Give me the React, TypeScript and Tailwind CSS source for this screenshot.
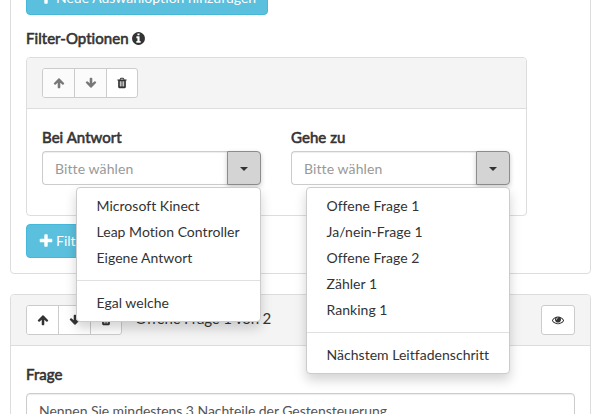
import type { ReactNode } from 'react';

const paths = {
  arrow:
    'M1675 971q0 51-37 90l-75 75q-38 38-91 38-54 0-90-38l-294-293v704q0 52-37.5 84.5t-90.5 32.5h-128q-53 0-90.5-32.5t-37.5-84.5v-704l-294 293q-36 38-90 38t-90-38l-75-75q-38-38-38-90 0-53 38-91l651-651q35-37 90-37 54 0 91 37l651 651q37 39 37 91z',
  trash:
    'M704 1376v-704q0-14-9-23t-23-9h-64q-14 0-23 9t-9 23v704q0 14 9 23t23 9h64q14 0 23-9t9-23zm256 0v-704q0-14-9-23t-23-9h-64q-14 0-23 9t-9 23v704q0 14 9 23t23 9h64q14 0 23-9t9-23zm256 0v-704q0-14-9-23t-23-9h-64q-14 0-23 9t-9 23v704q0 14 9 23t23 9h64q14 0 23-9t9-23zm-544-992h448l-48-117q-7-9-17-11h-317q-10 2-17 11zm928 32v64q0 14-9 23t-23 9h-96v948q0 83-47 143.5t-113 60.5h-832q-66 0-113-58.5t-47-141.5v-952h-96q-14 0-23-9t-9-23v-64q0-14 9-23t23-9h309l70-167q15-37 54-63t79-26h320q40 0 79 26t54 63l70 167h309q14 0 23 9t9 23z',
  eye: 'M1664 960q-152-236-381-353 61 104 61 225 0 185-131.5 316.5t-316.5 131.5-316.5-131.5-131.5-316.5q0-121 61-225-229 117-381 353 133 205 333.5 326.5t434.5 121.5 434.5-121.5 333.5-326.5zm-720-384q0-20-14-34t-34-14q-125 0-214.5 89.5t-89.5 214.5q0 20 14 34t34 14 34-14 14-34q0-86 61-147t147-61q20 0 34-14t14-34zm848 384q0 34-20 69-140 230-376.5 368.5t-499.5 138.5-499.5-139-376.5-368q-20-35-20-69t20-69q140-229 376.5-368t499.5-139 499.5 139 376.5 368q20 35 20 69z',
  info: 'M1152 1376v-160q0-14-9-23t-23-9h-96v-512q0-14-9-23t-23-9h-320q-14 0-23 9t-9 23v160q0 14 9 23t23 9h96v320h-96q-14 0-23 9t-9 23v160q0 14 9 23t23 9h448q14 0 23-9t9-23zm-128-896v-160q0-14-9-23t-23-9h-192q-14 0-23 9t-9 23v160q0 14 9 23t23 9h192q14 0 23-9t9-23zm640 416q0 209-103 385.5t-279.5 279.5-385.5 103-385.5-103-279.5-279.5-103-385.5 103-385.5 279.5-279.5 385.5-103 385.5 103 279.5 279.5 103 385.5z',
  plus: 'M1600 736v192q0 40-28 68t-68 28h-416v416q0 40-28 68t-68 28h-192q-40 0-68-28t-28-68v-416h-416q-40 0-68-28t-28-68v-192q0-40 28-68t68-28h416v-416q0-40 28-68t68-28h192q40 0 68 28t28 68v416h416q40 0 68 28t28 68z',
};

function Icon({ name, className }: { name: keyof typeof paths; className: string }) {
  return (
    <svg viewBox="0 0 1792 1792" fill="currentColor" className={`shrink-0 ${className}`}>
      <path d={paths[name]} />
    </svg>
  );
}

function Label({ children }: { children: ReactNode }) {
  return (
    <div className="h-5 pb-px text-[15px] leading-[19px] tracking-[0.05px] whitespace-nowrap text-[#333] [-webkit-text-stroke:0.6px_#333]">
      {children}
    </div>
  );
}

function ButtonGroup({ faded }: { faded?: boolean }) {
  const arrow = faded ? 'size-3 text-[#333] opacity-65' : 'size-3 text-[#333]';
  const bg = faded ? 'bg-[#fbfbfb]' : 'bg-white';
  return (
    <div className="flex h-[30px] w-24 shrink-0 overflow-hidden rounded-[3px] border border-[#ccc] bg-white">
      <button className={`flex w-[31px] items-center justify-center ${bg}`}>
        <Icon name="arrow" className={arrow} />
      </button>
      <button className={`flex w-8 items-center justify-center border-l border-[#ccc] ${bg}`}>
        <Icon name="arrow" className={`${arrow} rotate-180`} />
      </button>
      <button className="flex flex-1 items-center justify-center border-l border-[#ccc]">
        <Icon name="trash" className="size-3 text-[#333]" />
      </button>
    </div>
  );
}

function Combo({
  label,
  items,
  last,
  menuClass,
}: {
  label: string;
  items: string[];
  last: string;
  menuClass: string;
}) {
  return (
    <div className="w-[219px]">
      <Label>{label}</Label>
      <div className="relative mt-[3px] flex h-[34px]">
        <div className="flex w-[185px] items-center rounded-l border border-r-0 border-[#ccc] bg-white px-3 pt-0.5 text-sm tracking-[0.1px] text-[#999] shadow-[inset_0_1px_1px_rgba(0,0,0,0.075)]">
          Bitte wählen
        </div>
        <button className="flex w-[34px] items-center justify-center rounded-r border border-[#8c8c8c] bg-[#d4d4d4] shadow-[0_2px_5px_rgba(0,0,0,0.2)]">
          <span className="mt-px border-x-4 border-t-4 border-x-transparent border-t-[#333]" />
        </button>
        <ul
          className={`absolute top-9 right-0 z-10 rounded border border-[#ccc] bg-white py-[5px] text-sm leading-5 tracking-[0.03px] text-[#333] shadow-[0_6px_12px_rgba(0,0,0,0.175)] ${menuClass}`}
        >
          {items.map((item) => (
            <li key={item} className="py-[3px] pl-[19.5px] whitespace-nowrap">
              {item}
            </li>
          ))}
          <li className="my-[9px] h-px bg-[#e0e0e0]" />
          <li className="py-[3px] pl-[19.5px] whitespace-nowrap">{last}</li>
        </ul>
      </div>
    </div>
  );
}

function AddButton({ children, className }: { children: ReactNode; className: string }) {
  return (
    <button
      className={`flex h-[34px] items-center rounded border border-[#46b8da] bg-[#5bc0de] pl-[11px] text-sm whitespace-nowrap text-white ${className}`}
    >
      <Icon name="plus" className="mr-[2px] size-4" />
      {children}
    </button>
  );
}

export default function App() {
  return (
    <div className="h-[414px] w-[595px] overflow-hidden bg-white pl-2.5 font-['Lato','Liberation_Sans',sans-serif] text-[#333]">
      <section className="-mt-5 h-[294px] w-[581px] rounded border border-[#ddd] px-[15px]">
        <AddButton className="w-[242px]">Neue Auswahloption hinzufügen</AddButton>
        <div className="mt-[14px] flex h-5 items-start">
          <Label>Filter-Optionen</Label>
          <Icon name="info" className="mt-0.5 ml-[2px] size-[15px]" />
        </div>
        <div className="mt-[8px] h-[159px] w-[501px] rounded border border-[#ddd]">
          <div className="h-[51px] rounded-t-[3px] border-b border-[#ddd] bg-[#f4f4f4] px-[15px] pt-[10px]">
            <ButtonGroup faded />
          </div>
          <div className="flex gap-[30px] px-[15px] pt-[19px]">
            <Combo
              label="Bei Antwort"
              items={['Microsoft Kinect', 'Leap Motion Controller', 'Eigene Antwort']}
              last="Egal welche"
              menuClass="w-[185px]"
            />
            <Combo
              label="Gehe zu"
              items={['Offene Frage 1', 'Ja/nein-Frage 1', 'Offene Frage 2', 'Zähler 1', 'Ranking 1']}
              last="Nächstem Leitfadenschritt"
              menuClass="w-[204px]"
            />
          </div>
        </div>
        <AddButton className="mt-2 w-[180px]">Filter hinzufügen</AddButton>
      </section>

      <section className="mt-5 h-[200px] w-[581px] rounded border border-[#ddd]">
        <header className="flex h-[51px] items-start rounded-t-[3px] border-b border-[#ddd] bg-[#f4f4f4] px-[15px] pt-[10px]">
          <ButtonGroup />
          <h3 className="ml-[13px] text-[15px] leading-[27px] tracking-[-0.17px] whitespace-nowrap">
            Offene Frage 1 von 2
          </h3>
          <button className="ml-auto flex h-[30px] w-[34px] items-center justify-center rounded-[3px] border border-[#ccc] bg-white">
            <Icon name="eye" className="size-3" />
          </button>
        </header>
        <div className="px-[15px] pt-[19px]">
          <Label>Frage</Label>
          <div className="mt-2 h-[60px] rounded border border-[#ccc] px-3 pt-[7px] text-sm leading-5 tracking-[-0.05px] text-[#555] shadow-[inset_0_1px_1px_rgba(0,0,0,0.075)]">
            Nennen Sie mindestens 3 Nachteile der Gestensteuerung
          </div>
        </div>
      </section>
    </div>
  );
}
